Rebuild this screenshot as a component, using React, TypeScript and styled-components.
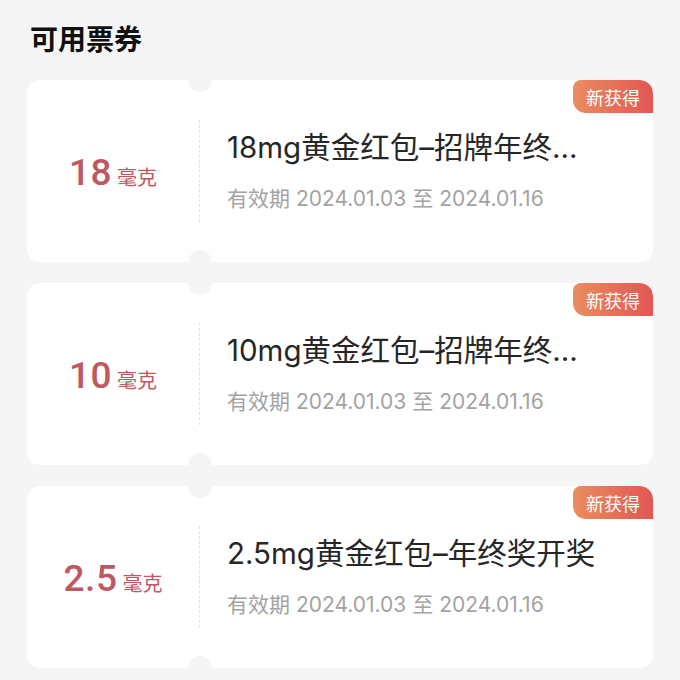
import React from "react";
import styled, { createGlobalStyle } from "styled-components";

const GlobalStyle = createGlobalStyle`
  html, body {
    margin: 0;
    padding: 0;
    background: #f5f5f5;
  }
  body {
    font-family: Inter, "Noto Sans CJK SC", sans-serif;
  }
`;

const Page = styled.div`
  width: 680px;
  min-height: 680px;
  padding: 18px 27px 0;
  box-sizing: border-box;
  overflow: hidden;
`;

const Heading = styled.h1`
  margin: 0 0 22px 3px;
  font-family: "Noto Sans CJK SC", sans-serif;
  font-size: 28px;
  line-height: 40px;
  font-weight: 700;
  color: #111;
`;

const List = styled.div`
  display: flex;
  flex-direction: column;
  gap: 21px;
`;

const Ticket = styled.div`
  position: relative;
  display: flex;
  height: 182px;
  background: #fff;
  border-radius: 13px;
  overflow: hidden;

  /* notches cut into the ticket at the tear line */
  &::before,
  &::after {
    content: "";
    position: absolute;
    left: 161px;
    width: 24px;
    height: 24px;
    border-radius: 50%;
    background: #f5f5f5;
  }
  &::before {
    top: -12px;
  }
  &::after {
    bottom: -12px;
  }
`;

const Amount = styled.div`
  width: 172px;
  display: flex;
  align-items: baseline;
  justify-content: center;
  align-self: center;
  color: #c05862;
  padding-top: 2px;
`;

const Value = styled.span`
  font-family: Roboto, "Noto Sans CJK SC", sans-serif;
  font-size: 37px;
  font-weight: 500;
  letter-spacing: 0.5px;
`;

const Unit = styled.span`
  font-family: "Noto Sans CJK SC", sans-serif;
  font-size: 20px;
  margin-left: 5px;
`;

const Divider = styled.div`
  width: 0;
  margin: 40px 0;
  border-left: 1.5px dashed #e2e2e2;
`;

const Info = styled.div`
  flex: 1;
  min-width: 0;
  display: flex;
  flex-direction: column;
  justify-content: center;
  gap: 20px;
  padding: 0 40px 0 27px;
`;

const Name = styled.div`
  font-size: 29.5px;
  line-height: 36px;
  color: #262626;
  white-space: nowrap;
  overflow: hidden;
  text-overflow: ellipsis;
`;

const Period = styled.div`
  font-size: 21px;
  line-height: 28px;
  color: #a3a3a3;
`;

const Badge = styled.div`
  position: absolute;
  top: 0;
  right: 0;
  width: 80px;
  height: 33px;
  display: flex;
  align-items: center;
  justify-content: center;
  border-radius: 8px 13px 0 13px;
  background: linear-gradient(90deg, #ea8d5e 0%, #e15654 100%);
  color: #fff;
  font-family: "Noto Sans CJK SC", sans-serif;
  font-size: 18px;
`;

interface Coupon {
  value: string;
  name: string;
  start: string;
  end: string;
}

const coupons: Coupon[] = [
  { value: "18", name: "18mg黄金红包–招牌年终…", start: "2024.01.03", end: "2024.01.16" },
  { value: "10", name: "10mg黄金红包–招牌年终…", start: "2024.01.03", end: "2024.01.16" },
  { value: "2.5", name: "2.5mg黄金红包–年终奖开奖", start: "2024.01.03", end: "2024.01.16" },
];

function App() {
  return (
    <Page>
      <GlobalStyle />
      <Heading>可用票券</Heading>
      <List>
        {coupons.map((c) => (
          <Ticket key={c.name}>
            <Amount>
              <Value>{c.value}</Value>
              <Unit>毫克</Unit>
            </Amount>
            <Divider />
            <Info>
              <Name>{c.name}</Name>
              <Period>
                有效期 {c.start} 至 {c.end}
              </Period>
            </Info>
            <Badge>新获得</Badge>
          </Ticket>
        ))}
      </List>
    </Page>
  );
}

export default App;
